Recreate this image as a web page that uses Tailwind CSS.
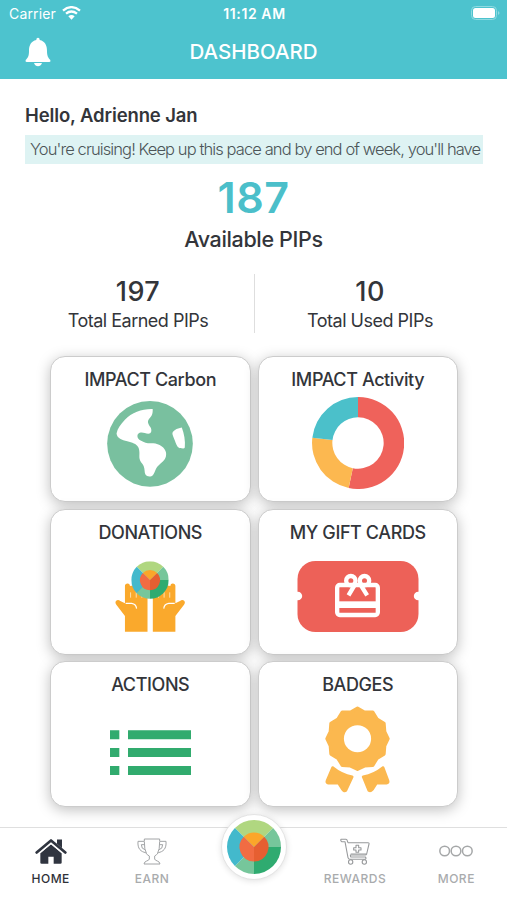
<!DOCTYPE html>
<html lang="en">
<head>
<meta charset="utf-8">
<title>Dashboard</title>
<script src="https://cdn.jsdelivr.net/npm/@tailwindcss/browser@4"></script>
</head>
<body class="bg-white">
<svg class="hidden">
  <symbol id="wheel" viewBox="-100 -100 200 200">
    <path fill="#b0d780" d="M0 0L-70.7-70.7A100 100 0 0 1 70.7-70.7Z"/>
    <path fill="#76c69b" d="M0 0L70.7-70.7A100 100 0 0 1 100 0Z"/>
    <path fill="#2fab70" d="M0 0H100A100 100 0 0 1 0 100Z"/>
    <path fill="#76c69b" d="M0 0V100A100 100 0 0 1-70.7 70.7Z"/>
    <path fill="#43b9cc" d="M0 0L-70.7 70.7A100 100 0 0 1-70.7-70.7Z"/>
    <path fill="#fba62a" d="M0 0L-38-38A54 54 0 0 1 38-38Z"/>
    <path fill="#e65f31" d="M0 0L38-38A54 54 0 0 1 0 54Z"/>
    <path fill="#f16c43" d="M0 0V54A54 54 0 0 1-38-38Z"/>
  </symbol>
</svg>
<div class="flex h-[900px] w-[507px] flex-col overflow-hidden font-['Inter',sans-serif] text-[#33353a]">
  <header class="h-[79px] shrink-0 bg-[#4dc3ce] text-white">
    <div class="grid h-7 grid-cols-3 items-center pl-[9px] pr-[7px]">
      <div class="-mt-[2px] flex items-center gap-[6px] text-[14px] tracking-[0.15px]">Carrier
        <svg class="h-[14px] w-[19px]" viewBox="0 0 57 42" fill="none" stroke="#fff" stroke-width="7"><path d="M3 14Q28 -7 54 14"/><path d="M12 23Q28 10 45 23"/><path d="M28.500 41L19 31Q28.500 23 38 31Z" fill="#fff" stroke="none"/></svg>
      </div>
      <div class="-mt-[2px] text-center text-[14px] font-semibold tracking-[0.6px]">11:12 AM</div>
      <svg class="-mt-[2px] h-[14px] w-[29px] justify-self-end" viewBox="0 0 29 14"><rect x=".5" y=".5" width="25" height="13" rx="4" fill="none" stroke="#8fdae1"/><rect x="2" y="2" width="22" height="10" rx="2.500" fill="#fff"/><path d="M27 5q3 2 0 4z" fill="#8fdae1"/></svg>
    </div>
    <div class="grid h-[51px] grid-cols-3 items-start px-[25px]">
      <svg class="mt-[9px] h-[30px] w-[26px]" viewBox="0 0 78 90" fill="#fff"><path d="M39 2C42 2 44 4 44 9C60 13 66 25 66 42C66 57 70 63 76 69Q78 75 73 75H5Q0 75 2 69C9 62 12 57 12 42C12 25 18 13 34 9C34 4 36 2 39 2Z"/><path d="M27 78H51Q47 88 39 88Q31 88 27 78Z"/></svg>
      <h1 class="mt-[10px] text-center text-[20.500px] leading-7 font-medium tracking-[0px] whitespace-nowrap">DASHBOARD</h1>
    </div>
  </header>
  <main class="flex h-[748px] shrink-0 flex-col">
    <section class="px-[25px] pt-[24px]">
      <h2 class="text-[18.500px] leading-6 font-semibold tracking-[-0.120px]">Hello, Adrienne Jan</h2>
      <p class="mt-[8px] h-[29px] w-[457.500px] overflow-hidden bg-[#def3f3] pl-[5px] text-[16.500px] leading-[29px] font-light tracking-[-0.900px] whitespace-nowrap text-[#4c5558]">You're cruising! Keep up this pace and by end of week, you'll have</p>
    </section>
    <section class="flex flex-col items-center">
      <div class="mt-[7px] h-[52px] text-[43px] leading-[52px] font-semibold tracking-[0.5px] text-[#4bbfca]">187</div>
      <div class="mt-[2px] text-[21.500px] leading-7 font-medium tracking-[-0.350px]">Available PIPs</div>
    </section>
    <section class="mx-[22px] mt-[21px] grid h-[57px] shrink-0 grid-cols-[233px_1fr] text-center">
      <div class="border-r border-[#dedede]">
        <div class="mt-[2px] text-[27px] leading-8 font-medium tracking-[0.400px]">197</div>
        <div class="mt-[1px] text-[18px] leading-6 tracking-[-0.5px]">Total Earned PIPs</div>
      </div>
      <div>
        <div class="mt-[2px] text-[27px] leading-8 font-medium tracking-[0.400px]">10</div>
        <div class="mt-[1px] text-[18px] leading-6 tracking-[-0.5px]">Total Used PIPs</div>
      </div>
    </section>
    <section class="ml-[50px] mt-[25px] grid w-[408px] grid-cols-2 gap-x-[7px] gap-y-[6.500px] text-[18px] leading-6 font-medium tracking-[-0.400px]">
      <div class="flex h-[146px] flex-col items-center rounded-[15px] border border-[#cccccc] bg-white pt-[11px] shadow-[0_3px_14px_rgba(0,0,0,0.25)]">
        <h3>IMPACT Carbon</h3>
        <svg class="mt-[9px] h-[86px] w-[86px]" viewBox="204 167 256 257"><circle cx="332" cy="295" r="128" fill="#79c09f"/><g fill="#fff"><path d="M340 191C341 208 336 213 328 222C323 230 328 237 333 245C339 256 336 265 327 265C317 263 309 259 301 262C291 266 293 280 304 285C317 293 327 294 342 293C359 294 378 306 380 322C382 340 372 347 359 358C347 368 349 377 341 388C335 395 323 394 318 386C315 379 317 371 313 361C309 352 302 348 301 340C299 329 303 318 297 305C291 294 279 291 264 287C248 283 234 279 232 264C235 249 244 237 257 223C278 201 309 190 340 191Z"/><path d="M427 246C434 264 438 286 436 306Q435 309 431 309C424 308 418 309 414 303C409 295 408 289 404 280C401 272 397 265 400 260C405 252 416 248 427 246Z"/></g></svg>
      </div>
      <div class="flex h-[146px] flex-col items-center rounded-[15px] border border-[#cccccc] bg-white pt-[11px] shadow-[0_3px_14px_rgba(0,0,0,0.25)]">
        <h3>IMPACT Activity</h3>
        <svg class="mt-[5px] h-[92px] w-[92px]" viewBox="-138 -138 276 276"><path fill="#ef625b" d="M0-138A138 138 0 1 1-28 135L-15.600 75.400A77 77 0 1 0 0-77Z"/><path fill="#fcb850" d="M-28 135A138 138 0 0 1-137-16L-76.500-9A77 77 0 0 0-15.600 75.400Z"/><path fill="#4bc0ca" d="M-137-16A138 138 0 0 1 0-138V-77A77 77 0 0 0-76.500-9Z"/></svg>
      </div>
      <div class="flex h-[146px] flex-col items-center rounded-[15px] border border-[#cccccc] bg-white pt-[11px] shadow-[0_3px_14px_rgba(0,0,0,0.25)]">
        <h3>DONATIONS</h3>
        <svg class="mt-[16px] h-[71px] w-[70px]" viewBox="226 168 211 213"><g id="hand"><path fill="#faa92c" d="M256 381V333L230 299C222 289 234 280 242 288L256 295V243Q256 235 264 235Q271 235 271 243L290 240H324V381Z"/><path d="M258 295H276Q290 297 291 311" fill="none" stroke="#fff" stroke-width="3.500"/><path d="M273 262V278M290 262V278M307 270V278" fill="none" stroke="#fde0ad" stroke-width="3"/></g><use href="#hand" transform="translate(664 0) scale(-1 1)"/><use href="#wheel" x="275" y="168" width="113" height="114"/></svg>
      </div>
      <div class="flex h-[146px] flex-col items-center rounded-[15px] border border-[#cccccc] bg-white pt-[11px] shadow-[0_3px_14px_rgba(0,0,0,0.25)]">
        <h3>MY GIFT CARDS</h3>
        <svg class="mt-[16px] h-[71px] w-[122px]" viewBox="140 167 365 213"><rect x="141" y="167" width="363" height="213" rx="54" fill="#ed6158"/><g fill="#fff"><circle cx="142" cy="272" r="13"/><circle cx="503" cy="272" r="13"/><rect x="262" y="288" width="120" height="20"/></g><g fill="none" stroke="#fff" stroke-width="13"><rect x="260" y="239" width="122" height="90" rx="8"/><circle cx="301" cy="226" r="14"/><circle cx="342" cy="226" r="14"/><path d="M315 235L294 270M328 235L350 270"/></g></svg>
      </div>
      <div class="flex h-[146px] flex-col items-center rounded-[15px] border border-[#cccccc] bg-white pt-[11px] shadow-[0_3px_14px_rgba(0,0,0,0.25)]">
        <h3>ACTIONS</h3>
        <svg class="mt-[33px] h-[45px] w-[81px]" viewBox="210 225 243 135" fill="#31ab6e"><path d="M210 226h28v27h-28zM264 226h189v27h-189zM210 279h28v27h-28zM264 279h189v27h-189zM210 333h28v27h-28zM264 333h189v27h-189z"/></svg>
      </div>
      <div class="flex h-[146px] flex-col items-center rounded-[15px] border border-[#cccccc] bg-white pt-[11px] shadow-[0_3px_14px_rgba(0,0,0,0.25)]">
        <h3>BADGES</h3>
        <svg class="mt-[9px] h-[87px] w-[65px]" viewBox="222 151 196 261" fill="#fbb84f" stroke="#fbb84f" stroke-linejoin="round"><path stroke-width="10" d="M320 157L341 169L366 169L379 190L400 203L402 228L412 249L402 270L400 295L379 308L366 329L341 331L320 341L299 331L274 329L261 308L240 295L238 270L228 249L238 228L240 203L261 190L274 169L299 169Z"/><circle cx="320" cy="249" r="41" fill="#fff" stroke="none"/><path stroke-width="8" d="M245 336Q272 358 304 364L285 405Q280 409 275 402L262 382L232 383Q226 382 228 376ZM397 336Q370 358 337 364L354 405Q359 409 365 402L378 382L407 383Q414 382 412 376Z"/></svg>
      </div>
    </section>
  </main>
  <nav class="relative grid h-[73px] shrink-0 grid-cols-5 border-t border-[#dfdfdf] bg-white text-center text-[12px] leading-4 font-medium tracking-[0.5px] text-[#a9abad]">
    <div class="flex flex-col items-center pt-[10px] text-[#303238]">
      <svg class="h-[27px] w-[32px]" viewBox="106 114 96 78" fill="#303540"><path d="M122 158L154 131L186 158V187Q186 190 182 190H162V169H146V190H126Q122 190 122 187Z"/><path d="M172 117H187V143L172 130Z"/><path d="M111 156L154 120L197 156" fill="none" stroke="#303540" stroke-width="8" stroke-linecap="round" stroke-linejoin="round"/><path d="M119 159L154 130L189 159" fill="none" stroke="#fff" stroke-width="2.500"/></svg>
      <span class="mt-[6px]">HOME</span>
    </div>
    <div class="flex flex-col items-center pt-[10px]">
      <svg class="h-[27px] w-[30px]" viewBox="411 112 90 81" fill="none" stroke="#a2a4a6" stroke-width="3" stroke-linejoin="round"><path d="M433 115H479V122H498C500 145 489 153 475 156Q470 163 464 166V175C464 181 480 180 480 190H432C432 180 448 181 448 175V166Q441 163 437 156C423 153 412 145 414 122H433Z"/><path d="M433 123Q433 148 439 157M479 123Q479 148 473 157M433 132H424Q424 145 435 147M479 132H488Q488 145 477 147"/></svg>
      <span class="mt-[6px]">EARN</span>
    </div>
    <div></div>
    <div class="flex flex-col items-center pt-[10px]">
      <svg class="h-[27px] w-[30px]" viewBox="418 112 90 81" fill="none" stroke="#97999b" stroke-width="3.200" stroke-linejoin="round"><path d="M421 116H436Q439 116 440 121L442 126H502Q506 126 505 130L498 160Q497 163 493 163H449L450 169H494Q498 173 494 176H448Q443 176 442 171L433 123H423Q419 120 421 116Z"/><path d="M466 134H474V141H481V148H474V155H466V148H459V141H466ZM450 160H496"/><circle cx="450" cy="184" r="6.500"/><circle cx="491" cy="184" r="6.500"/></svg>
      <span class="mt-[6px]">REWARDS</span>
    </div>
    <div class="flex flex-col items-center pt-[10px]">
      <svg class="h-[27px] w-[34px]" viewBox="0 0 102 81" fill="none" stroke="#a5a7a8" stroke-width="4.500"><circle cx="17" cy="39" r="14.500"/><circle cx="51" cy="39" r="14.500"/><circle cx="85" cy="39" r="14.500"/></svg>
      <span class="mt-[6px]">MORE</span>
    </div>
    <div class="absolute -top-[14px] left-[221px] flex h-[66px] w-[66px] items-center justify-center rounded-full border border-[#e4e4e4] bg-white shadow-[0_1px_6px_rgba(0,0,0,0.12)]"><svg class="h-[54px] w-[54px]"><use href="#wheel"/></svg></div>
  </nav>
</div>
</body>
</html>
